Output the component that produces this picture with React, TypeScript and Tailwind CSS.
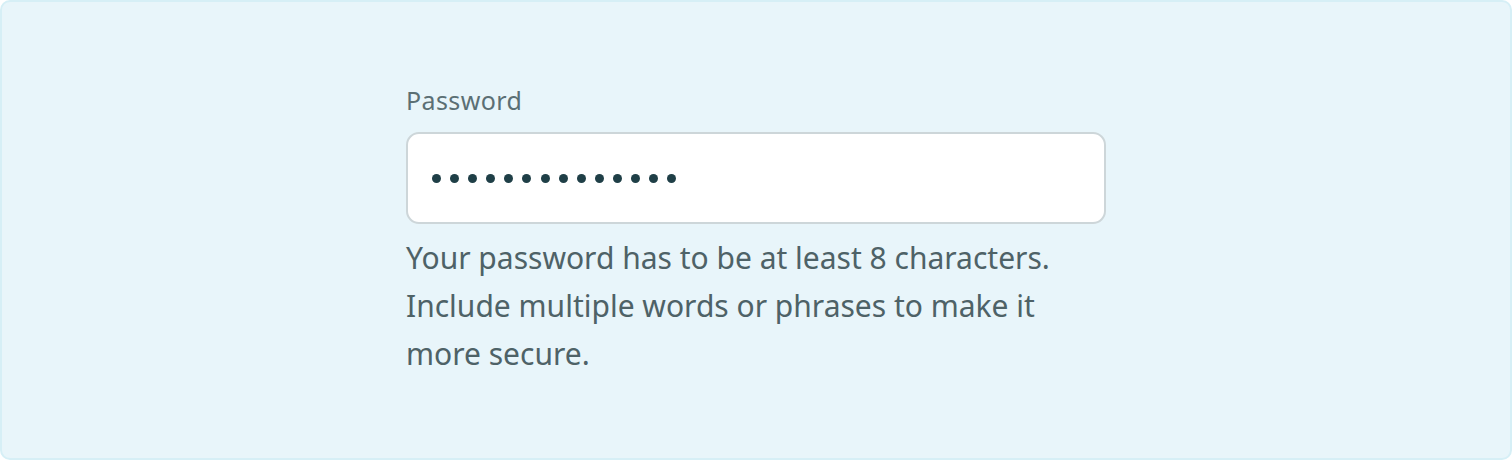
import React from 'react';

const MASK_LENGTH = 14;

export default function App() {
  return (
    <div
      className="h-[460px] w-[1512px] bg-white"
      style={{ fontFamily: '"Noto Sans", Lato, sans-serif' }}
    >
      <div className="flex h-full w-full justify-center rounded-[10px] border-2 border-[#d6eff6] bg-[#e8f5fa] pt-[82px]">
        <div className="flex w-[700px] flex-col">
          <label className="text-[25px] leading-[32px] tracking-[0.4px] text-[#5b6f74]">Password</label>

          <div className="mt-[16px] flex h-[92px] items-center gap-[9.1px] rounded-[13px] border-2 border-[#cdd6d9] bg-white px-[24px]">
            {Array.from({ length: MASK_LENGTH }).map((_, i) => (
              <span key={i} className="h-[9px] w-[9px] rounded-full bg-[#1f3f47]" />
            ))}
          </div>

          <p className="mt-[10px] max-w-[665px] text-[30px] leading-[48px] text-[#4e6267]">
            Your password has to be at least 8 characters. Include multiple words or phrases to make it more secure.
          </p>
        </div>
      </div>
    </div>
  );
}
